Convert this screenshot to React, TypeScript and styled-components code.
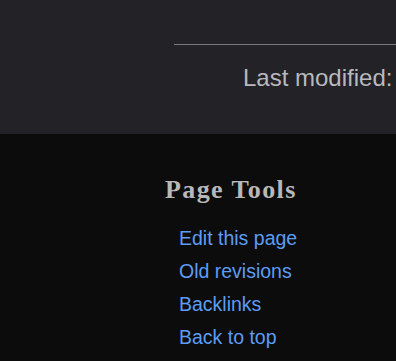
import React from "react";
import styled, { createGlobalStyle } from "styled-components";

const Global = createGlobalStyle`
  html, body { margin: 0; padding: 0; background: #0c0c0c; }
  body { width: 396px; height: 361px; overflow: hidden; }
`;

const Page = styled.div`
  display: flex;
  flex-direction: column;
  width: 396px;
  height: 361px;
  overflow: hidden;
`;

const ContentArea = styled.div`
  background: #222227;
  height: 134px;
  padding-top: 44px;
  box-sizing: border-box;
  display: flex;
  flex-direction: column;
`;

const Divider = styled.hr`
  margin: 0 0 0 174px;
  border: 0;
  border-top: 1px solid #7a7a7e;
  height: 0;
`;

const PageInfo = styled.div`
  margin-top: 18px;
  padding-left: 243px;
  white-space: nowrap;
  font-family: "Liberation Sans", Arial, sans-serif;
  font-size: 24px;
  line-height: 30px;
  color: #b9b9bd;
`;

const Footer = styled.div`
  flex: 1;
  background: #0c0c0c;
  padding: 41px 0 0 165px;
  display: flex;
  flex-direction: column;
`;

const Heading = styled.h2`
  margin: 0;
  font-family: "Liberation Serif", "Times New Roman", serif;
  font-weight: bold;
  font-size: 26px;
  line-height: 30px;
  letter-spacing: 1.4px;
  color: #b8b8b8;
`;

const ToolList = styled.ul`
  list-style: none;
  margin: 17px 0 0 0;
  padding: 0 0 0 14px;
  display: flex;
  flex-direction: column;
`;

const ToolLink = styled.a`
  display: block;
  font-family: "Liberation Sans", Arial, sans-serif;
  font-size: 19.5px;
  line-height: 33px;
  color: #5d9cf5;
  text-decoration: none;
`;

const tools = ["Edit this page", "Old revisions", "Backlinks", "Back to top"];

export default function App() {
  return (
    <Page>
      <Global />
      <ContentArea>
        <Divider />
        <PageInfo>Last modified:</PageInfo>
      </ContentArea>
      <Footer>
        <Heading>Page Tools</Heading>
        <ToolList>
          {tools.map((t) => (
            <li key={t}>
              <ToolLink href="#">{t}</ToolLink>
            </li>
          ))}
        </ToolList>
      </Footer>
    </Page>
  );
}
